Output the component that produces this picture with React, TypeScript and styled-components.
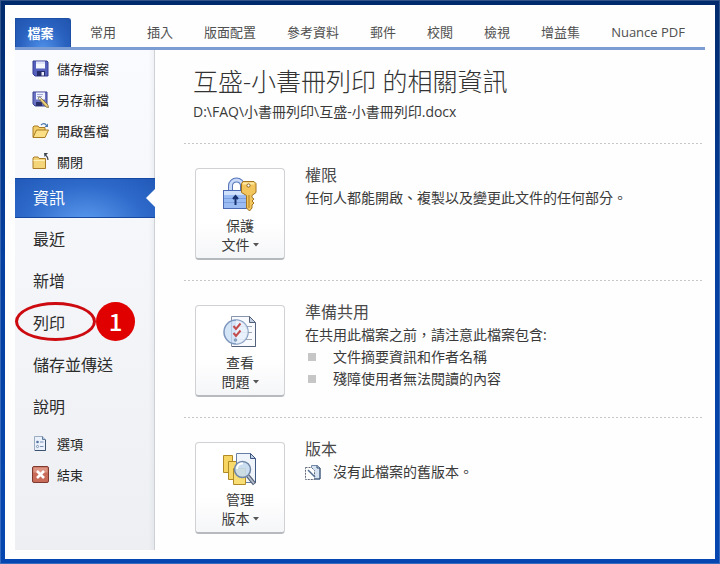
import React from "react";
import styled, { createGlobalStyle, css } from "styled-components";

const GlobalStyle = createGlobalStyle`
  * { box-sizing: border-box; }
  body {
    margin: 0;
    font-family: "Open Sans", "Noto Sans CJK TC", sans-serif;
    color: #3a3a3a;
  }
  button { font-family: inherit; color: inherit; border: 0; background: none; padding: 0; margin: 0; cursor: pointer; }
  h1, h2, p, ul { margin: 0; padding: 0; font-weight: 400; }
  ul { list-style: none; }
  svg { display: block; flex: none; }
`;

const Frame = styled.div`
  display: flex;
  min-height: 100vh;
  padding: 5px;
  background: linear-gradient(#002a6c, #0640a0 45%, #0546b0);
  box-shadow: inset 0 0 0 1px rgba(255, 255, 255, 0.2);
`;

const Window = styled.div`
  flex: 1;
  display: flex;
  flex-direction: column;
  padding: 13px 10px 9px;
  background: #fefefe;
`;

const Ribbon = styled.nav`
  display: flex;
  align-items: stretch;
  gap: 31px;
  height: 32px;
  border-bottom: 3px solid #7b9dd3;
`;

const FileTab = styled.button`
  width: 56px;
  margin-right: -12px;
  padding-right: 5px;
  border: 1px solid #1d4fa5;
  border-bottom: 0;
  border-radius: 0 3px 0 0;
  background: radial-gradient(ellipse at 50% 110%, #4f92ea, #2a62c0 60%, #2054ae);
  color: #fff;
  font-size: 13px;
  font-weight: 700;
  line-height: 25px;
`;

const Tab = styled.button`
  font-size: 13px;
  line-height: 26px;
  padding-bottom: 2px;
  color: #505050;
  white-space: nowrap;
`;

const Body = styled.div`
  flex: 1;
  display: flex;
`;

const Sidebar = styled.nav`
  flex: none;
  width: 140px;
  padding-top: 3px;
  border-right: 1px solid #cdd0d5;
  background: linear-gradient(90deg, transparent 96%, rgba(150, 160, 175, 0.1)),
    linear-gradient(#fafbfe, #f3f5f8 50%, #edeff2);
`;

const MenuGroup = styled.ul<{ $top?: number; $bottom?: number }>`
  margin-top: ${(p) => p.$top ?? 0}px;
  margin-bottom: ${(p) => p.$bottom ?? 0}px;
`;

const MenuItem = styled.li`
  position: relative;
`;

const Command = styled.button`
  display: flex;
  align-items: center;
  gap: 8px;
  width: 100%;
  height: 31px;
  padding-left: 17px;
  padding-bottom: 1px;
  font-size: 13px;
  color: #222;
`;

const Place = styled.button<{ $current?: boolean }>`
  display: flex;
  align-items: center;
  width: 100%;
  height: 42px;
  padding-left: 18px;
  padding-bottom: 3px;
  font-size: 16px;
  color: #2c2c2c;
  ${(p) =>
    p.$current &&
    css`
      position: relative;
      width: 140px;
      height: 40px;
      border-top: 1px solid #1748a0;
      border-bottom: 1px solid #1748a0;
      background: radial-gradient(ellipse at 50% 120%, #5c9cf0, #2f6bcb 60%, #2159b8);
      color: #fff;
      &::after {
        content: "";
        position: absolute;
        right: 0;
        top: 10px;
        border: solid transparent;
        border-width: 9px 9px 9px 0;
        border-right-color: #fff;
      }
    `}
`;

const Ring = styled.span`
  position: absolute;
  top: 0;
  left: 0;
  width: 81px;
  height: 39px;
  border: 3px solid #cc0a10;
  border-radius: 50%;
  pointer-events: none;
`;

const StepBadge = styled.span`
  position: absolute;
  top: 0;
  left: 81px;
  width: 39px;
  height: 39px;
  border-radius: 50%;
  background: #e00000;
  color: #fff;
  font: 500 24px/37px "Noto Sans CJK TC", sans-serif;
  text-align: center;
`;

const Main = styled.main`
  flex: 1;
  padding: 14px 2px 0 29px;
`;

const Heading = styled.header`
  padding: 0 9px 20px;
`;

const Title = styled.h1`
  font-size: 25px;
  font-weight: 300;
  line-height: 34px;
  color: #333;
`;

const Path = styled.p`
  padding-top: 3px;
  font-size: 14px;
  line-height: 22px;
`;

const Section = styled.section`
  display: flex;
  align-items: flex-start;
  gap: 20px;
  padding: 20px 0 20px 11px;
  background: repeating-linear-gradient(90deg, #c6c6c6 0 2px, transparent 2px 4px) top / 100% 1px no-repeat;
  &:last-child { padding-bottom: 0; }
`;

const BigButton = styled.button`
  display: flex;
  flex-direction: column;
  align-items: center;
  flex: none;
  width: 90px;
  height: 92px;
  margin-top: 5px;
  padding-top: 8px;
  border: 1px solid #cfd1d4;
  border-bottom: 2px solid #b6b9bd;
  border-radius: 4px;
  background: linear-gradient(#fff 60%, #f5f6f8);
  font-size: 14px;
  line-height: 19px;
`;

const Caption = styled.span`
  padding-top: 3px;
`;

const CaptionRow = styled.span`
  display: flex;
  align-items: center;
  gap: 3px;
`;

const Info = styled.div`
  flex: 1;
  font-size: 14px;
  line-height: 22px;
`;

const InfoTitle = styled.h2`
  font-size: 16px;
  line-height: 24px;
  color: #4a4a4a;
`;

const Row = styled.li`
  display: flex;
  align-items: center;
  gap: 17px;
  padding-left: 3px;
  &::before {
    content: "";
    width: 8px;
    height: 8px;
    background: #c6c6c6;
  }
`;

const VersionRow = styled.p`
  display: flex;
  align-items: center;
  gap: 12px;
`;

const SaveIcon = () => (
  <svg width="17" height="17" viewBox="0 0 17 17">
    <path d="M1 1h14l1 1v14H3l-2-2z" fill="#5560bd" stroke="#343c91" />
    <path d="M4 1.500h9v7H4z" fill="#f5f7ff" />
    <path d="M4 2h9v2H4z" fill="#dfe4fa" />
    <path d="M5 11h8v5H5z" fill="#262c68" />
    <path d="M9.500 12h2.500v3.500H9.500z" fill="#e8ebfb" />
  </svg>
);

const SaveAsIcon = () => (
  <svg width="17" height="17" viewBox="0 0 17 17">
    <path d="M1 1h14v14H3l-2-2z" fill="#6a73c4" stroke="#3b438f" />
    <path d="M4 1.500h9v7H4z" fill="#f1f3ff" />
    <path d="M5 3.500h6M5 5.500h5" stroke="#a3aad6" />
    <path d="M4 11h6v4H4z" fill="#2a306b" />
    <path d="M6 7l2-1 8 8 .5 2.500-2.500-.5z" fill="#e9cf79" stroke="#7d6836" strokeWidth=".8" />
    <path d="M6 7l2-1 1.500 1.500-2 1.500z" fill="#f7f5ed" stroke="#77735f" strokeWidth=".6" />
  </svg>
);

const OpenIcon = () => (
  <svg width="17" height="17" viewBox="0 0 17 17">
    <path d="M1 15V5l1-1h4l1 1.500h6V8" fill="#f2cf69" stroke="#a97b22" />
    <path d="M1 15.500L4.500 8H16.500l-3.500 7.500z" fill="#fbdf86" stroke="#a97b22" />
    <path d="M9 3c2-2 4-2 5.500.5" fill="none" stroke="#4c79ad" strokeWidth="1.200" />
    <path d="M16 1.500V5h-3.500z" fill="#4c79ad" />
  </svg>
);

const CloseIcon = () => (
  <svg width="17" height="17" viewBox="0 0 17 17">
    <path d="M1 15.500V5l1-1h4l1 1.500h6.500v10z" fill="#f5d579" stroke="#a87c28" />
    <path d="M1.500 7.500H13" stroke="#fff0b8" />
    <path d="M16 7c0-2-.5-3.500-2.500-5" fill="none" stroke="#3f4652" strokeWidth="1.200" />
    <path d="M12 0h4l-3.500 4z" fill="#3f4652" />
  </svg>
);

const OptionsIcon = () => (
  <svg width="17" height="17" viewBox="0 0 17 17">
    <path d="M2.500 1.500h8l3 3v11h-11z" fill="#eaf1fa" stroke="#9aabc2" />
    <path d="M13.500 5v10.500H3" fill="none" stroke="#3d526f" />
    <path d="M10.500 1.500v3h3" fill="#b9cbe2" stroke="#627a9b" />
    <circle cx="5.500" cy="7" r="1.300" fill="#5574a0" />
    <circle cx="5.500" cy="11.500" r="1.100" fill="#fff" stroke="#5574a0" strokeWidth=".7" />
    <path d="M8 7h3.500M8 11.500h3.500" stroke="#7890b2" />
  </svg>
);

const ExitIcon = () => (
  <svg width="17" height="17" viewBox="0 0 17 17">
    <rect x=".5" y=".5" width="16" height="16" rx="1.500" fill="#c86c59" stroke="#7f3a30" />
    <path d="M1.500 1.500h14v5h-14z" fill="#dc9484" />
    <path d="M5 5l7 7M12 5l-7 7" stroke="#fff" strokeWidth="2.600" />
  </svg>
);

const ProtectIcon = () => (
  <svg width="36" height="36" viewBox="0 0 36 36">
    <path d="M8.500 15V9c0-8 12-8 12 0v6" fill="none" stroke="#5575b8" strokeWidth="5" />
    <path d="M8.500 15V9c0-8 12-8 12 0v6" fill="none" stroke="#c8daf8" strokeWidth="3" />
    <rect x="1.500" y="13.500" width="24" height="18" fill="#9bbcf3" stroke="#4a69b0" />
    <path d="M2 14h23v4H2z" fill="#cfe0fb" />
    <path d="M2 21.500h23M2 25.500h23" stroke="#7c9fe0" />
    <path d="M13.500 28v-8M11 22l2.500-3 2.500 3" fill="none" stroke="#17326e" strokeWidth="2" />
    <path d="M21 4.500h11l2 2v9l-4 3v2l2 1.500-2 2 2 2-2 2v3l-2.500 3-3-3V18.500l-5-3v-9z" fill="#f2c65c" stroke="#a37420" />
    <path d="M21 6.500h11" stroke="#fce9a4" strokeWidth="2" />
    <circle cx="26.500" cy="8.500" r="1.600" fill="#fff" stroke="#8c641c" />
    <path d="M27 18v13" stroke="#ad7d26" />
  </svg>
);

const InspectIcon = () => (
  <svg width="36" height="36" viewBox="0 0 36 36">
    <path d="M9.500 2.500h18l6 6v24h-24z" fill="#f8fafd" stroke="#8995ab" />
    <path d="M33.500 9v23.500H10" fill="none" stroke="#53617d" />
    <path d="M27.500 2.500v6h6z" fill="#c3cfe0" stroke="#53617d" />
    <path d="M18 12.500h12M18 18.500h12M18 25.500h12" stroke="#9da8bb" />
    <circle cx="14" cy="18" r="12" fill="#c7dcf6" fillOpacity=".75" stroke="#7c96bd" strokeWidth="1.500" />
    <path d="M14 6a12 12 0 0 1 0 24z" fill="#fff" fillOpacity=".5" />
    <path d="M11.500 12l2.500 3 4.500-5.500M11.500 19l2.500 3 4.500-5.500" fill="none" stroke="#c44b4b" strokeWidth="2" />
    <circle cx="13.500" cy="26" r="1.800" fill="#8ba0c0" />
  </svg>
);

const VersionsIcon = () => (
  <svg width="36" height="36" viewBox="0 0 36 36">
    <path d="M1.500 4.500h9v17h-9z" fill="#f6d563" stroke="#b08a24" />
    <path d="M6.500 10.500h12v18h-12z" fill="#f8da6b" stroke="#b08a24" />
    <path d="M14.500 2.500h14l5 5v24h-19z" fill="#f0f5fb" stroke="#6680a5" />
    <path d="M28.500 2.500v5h5z" fill="#bfd0e6" stroke="#3f5982" />
    <path d="M33.500 8v23.500" stroke="#3f5982" />
    <path d="M11.500 17.500h12v16h-12z" fill="#f9dd75" stroke="#b08a24" />
    <path d="M26 25l6.500 8" stroke="#4f5b70" strokeWidth="4" />
    <path d="M26 25l6 7.500" stroke="#b1bccd" strokeWidth="2" />
    <circle cx="20.500" cy="18.500" r="8" fill="#c6dcef" fillOpacity=".9" stroke="#6f86a6" strokeWidth="1.500" />
    <path d="M15 18c0-4 3-6 6-5.500" fill="none" stroke="#fff" strokeWidth="2" />
  </svg>
);

const NoVersionIcon = () => (
  <svg width="16" height="17" viewBox="0 0 16 17">
    <path d="M6.500 1.500h6l2.500 2.500v11H6.500z" fill="#d5e2f1" stroke="#7289a8" />
    <path d="M15 4v11H9" fill="none" stroke="#344c6e" />
    <path d="M12 1.500V4h3" fill="none" stroke="#344c6e" />
    <path d="M.5 3.500h6l3 3v9H.5z" fill="#fff" stroke="#606a78" strokeDasharray="2 1" />
    <path d="M3 6l7 7" stroke="#526d91" strokeWidth="1.500" />
  </svg>
);

const DownArrow = () => (
  <svg width="6" height="4" viewBox="0 0 6 4">
    <path d="M0 0h6L3 3.500z" fill="#555" />
  </svg>
);

const tabs = ["常用", "插入", "版面配置", "參考資料", "郵件", "校閱", "檢視", "增益集", "Nuance PDF"];

const fileCommands = [
  { label: "儲存檔案", icon: <SaveIcon /> },
  { label: "另存新檔", icon: <SaveAsIcon /> },
  { label: "開啟舊檔", icon: <OpenIcon /> },
  { label: "關閉", icon: <CloseIcon /> },
];

const appCommands = [
  { label: "選項", icon: <OptionsIcon /> },
  { label: "結束", icon: <ExitIcon /> },
];

const places = ["最近", "新增", "列印", "儲存並傳送", "說明"];

type ActionProps = { icon: React.ReactNode; first: string; second: string };

const Action = ({ icon, first, second }: ActionProps) => (
  <BigButton type="button">
    {icon}
    <Caption>{first}</Caption>
    <CaptionRow>
      {second}
      <DownArrow />
    </CaptionRow>
  </BigButton>
);

export default function App() {
  return (
    <>
      <GlobalStyle />
      <Frame>
        <Window>
          <Ribbon>
            <FileTab type="button">檔案</FileTab>
            {tabs.map((tab) => (
              <Tab type="button" key={tab}>{tab}</Tab>
            ))}
          </Ribbon>
          <Body>
            <Sidebar>
              <MenuGroup $bottom={1}>
                {fileCommands.map(({ label, icon }) => (
                  <MenuItem key={label}>
                    <Command type="button">{icon}{label}</Command>
                  </MenuItem>
                ))}
              </MenuGroup>
              <Place type="button" $current aria-current="page">資訊</Place>
              <MenuGroup>
                {places.map((label) => (
                  <MenuItem key={label}>
                    <Place type="button">{label}</Place>
                    {label === "列印" && (
                      <>
                        <Ring />
                        <StepBadge>1</StepBadge>
                      </>
                    )}
                  </MenuItem>
                ))}
              </MenuGroup>
              <MenuGroup>
                {appCommands.map(({ label, icon }) => (
                  <MenuItem key={label}>
                    <Command type="button">{icon}{label}</Command>
                  </MenuItem>
                ))}
              </MenuGroup>
            </Sidebar>
            <Main>
              <Heading>
                <Title>互盛-小書冊列印 的相關資訊</Title>
                <Path>D:\FAQ\小書冊列印\互盛-小書冊列印.docx</Path>
              </Heading>
              <Section>
                <Action icon={<ProtectIcon />} first="保護" second="文件" />
                <Info>
                  <InfoTitle>權限</InfoTitle>
                  <p>任何人都能開啟、複製以及變更此文件的任何部分。</p>
                </Info>
              </Section>
              <Section>
                <Action icon={<InspectIcon />} first="查看" second="問題" />
                <Info>
                  <InfoTitle>準備共用</InfoTitle>
                  <p>在共用此檔案之前，請注意此檔案包含:</p>
                  <ul>
                    <Row>文件摘要資訊和作者名稱</Row>
                    <Row>殘障使用者無法閱讀的內容</Row>
                  </ul>
                </Info>
              </Section>
              <Section>
                <Action icon={<VersionsIcon />} first="管理" second="版本" />
                <Info>
                  <InfoTitle>版本</InfoTitle>
                  <VersionRow>
                    <NoVersionIcon />
                    沒有此檔案的舊版本。
                  </VersionRow>
                </Info>
              </Section>
            </Main>
          </Body>
        </Window>
      </Frame>
    </>
  );
}
